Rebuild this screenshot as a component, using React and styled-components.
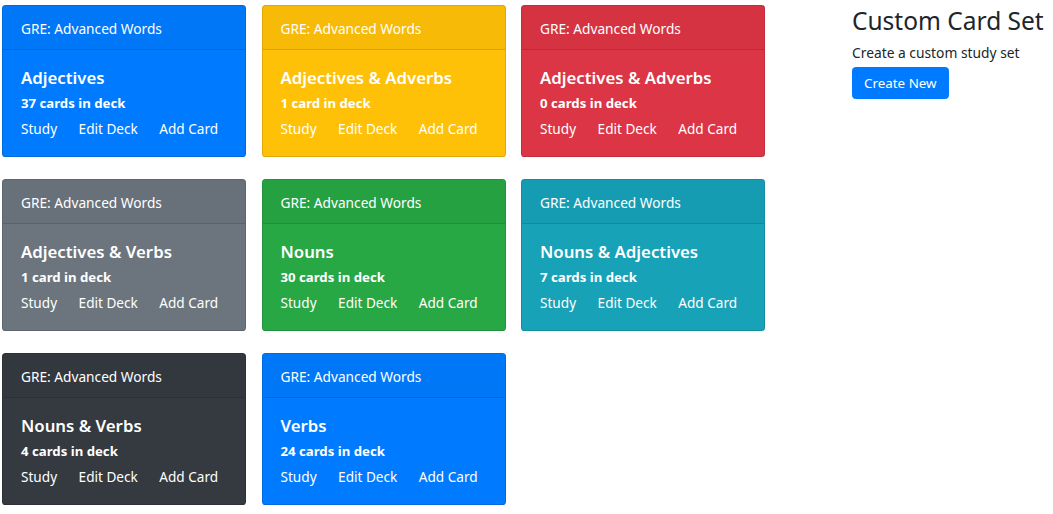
import React from "react";
import styled, { createGlobalStyle } from "styled-components";

const GlobalStyle = createGlobalStyle`
  html, body { margin: 0; padding: 0; background: #fff; }
  body {
    font-family: "Noto Sans", "Open Sans", Arial, sans-serif;
    color: #212529;
    -webkit-font-smoothing: antialiased;
  }
`;

const Page = styled.div`
  display: flex;
  align-items: flex-start;
  padding: 5px 0 0 2px;
`;

const DeckGrid = styled.div`
  display: grid;
  grid-template-columns: repeat(3, 244px);
  grid-auto-rows: 152px;
  column-gap: 15.5px;
  row-gap: 22px;
`;

const COLORS = {
  primary: "#007bff",
  warning: "#ffc107",
  danger: "#dc3545",
  secondary: "#6c757d",
  success: "#28a745",
  info: "#17a2b8",
  dark: "#343a40",
};

const Card = styled.div`
  display: flex;
  flex-direction: column;
  background: ${(p) => COLORS[p.$variant]};
  border: 1px solid rgba(0, 0, 0, 0.125);
  border-radius: 3.6px;
  color: #fff;
  overflow: hidden;
`;

const CardHeader = styled.div`
  height: 44px;
  box-sizing: border-box;
  padding: 2px 18px 0;
  display: flex;
  align-items: center;
  background: rgba(0, 0, 0, 0.03);
  border-bottom: 1px solid rgba(0, 0, 0, 0.125);
  font-size: 13.7px;
  line-height: 1;
`;

const CardBody = styled.div`
  padding: 17px 18px 0;
  display: flex;
  flex-direction: column;
`;

const Title = styled.h5`
  margin: 0;
  font-size: 16.8px;
  font-weight: 600;
  line-height: 22px;
`;

const Count = styled.div`
  margin-top: 5px;
  font-size: 13.2px;
  font-weight: 700;
  line-height: 18px;
`;

const Links = styled.div`
  display: flex;
  gap: 21.5px;
  margin-top: 7px;
`;

const LinkItem = styled.a`
  color: #fff;
  text-decoration: none;
  font-size: 13.6px;
  line-height: 20px;
  cursor: pointer;
`;

const Sidebar = styled.div`
  margin-left: 87px;
  display: flex;
  flex-direction: column;
  align-items: flex-start;
`;

const SideTitle = styled.h3`
  margin: 0;
  font-size: 24.5px;
  font-weight: 400;
  line-height: 32px;
  color: #212529;
  white-space: nowrap;
`;

const SideText = styled.p`
  margin: 7px 0 0;
  font-size: 13.8px;
  line-height: 17px;
  color: #212529;
`;

const Button = styled.button`
  margin-top: 6px;
  height: 32px;
  padding: 0 11px;
  border: 1px solid #007bff;
  border-radius: 3.6px;
  background: #007bff;
  color: #fff;
  font-family: inherit;
  font-size: 13.4px;
  cursor: pointer;
`;

const decks = [
  { title: "Adjectives", count: "37 cards in deck", variant: "primary" },
  { title: "Adjectives & Adverbs", count: "1 card in deck", variant: "warning" },
  { title: "Adjectives & Adverbs", count: "0 cards in deck", variant: "danger" },
  { title: "Adjectives & Verbs", count: "1 card in deck", variant: "secondary" },
  { title: "Nouns", count: "30 cards in deck", variant: "success" },
  { title: "Nouns & Adjectives", count: "7 cards in deck", variant: "info" },
  { title: "Nouns & Verbs", count: "4 cards in deck", variant: "dark" },
  { title: "Verbs", count: "24 cards in deck", variant: "primary" },
];

export default function App() {
  return (
    <>
      <GlobalStyle />
      <Page>
        <DeckGrid>
          {decks.map((d, i) => (
            <Card key={i} $variant={d.variant}>
              <CardHeader>GRE: Advanced Words</CardHeader>
              <CardBody>
                <Title>{d.title}</Title>
                <Count>{d.count}</Count>
                <Links>
                  <LinkItem>Study</LinkItem>
                  <LinkItem>Edit Deck</LinkItem>
                  <LinkItem>Add Card</LinkItem>
                </Links>
              </CardBody>
            </Card>
          ))}
        </DeckGrid>
        <Sidebar>
          <SideTitle>Custom Card Set</SideTitle>
          <SideText>Create a custom study set</SideText>
          <Button>Create New</Button>
        </Sidebar>
      </Page>
    </>
  );
}
